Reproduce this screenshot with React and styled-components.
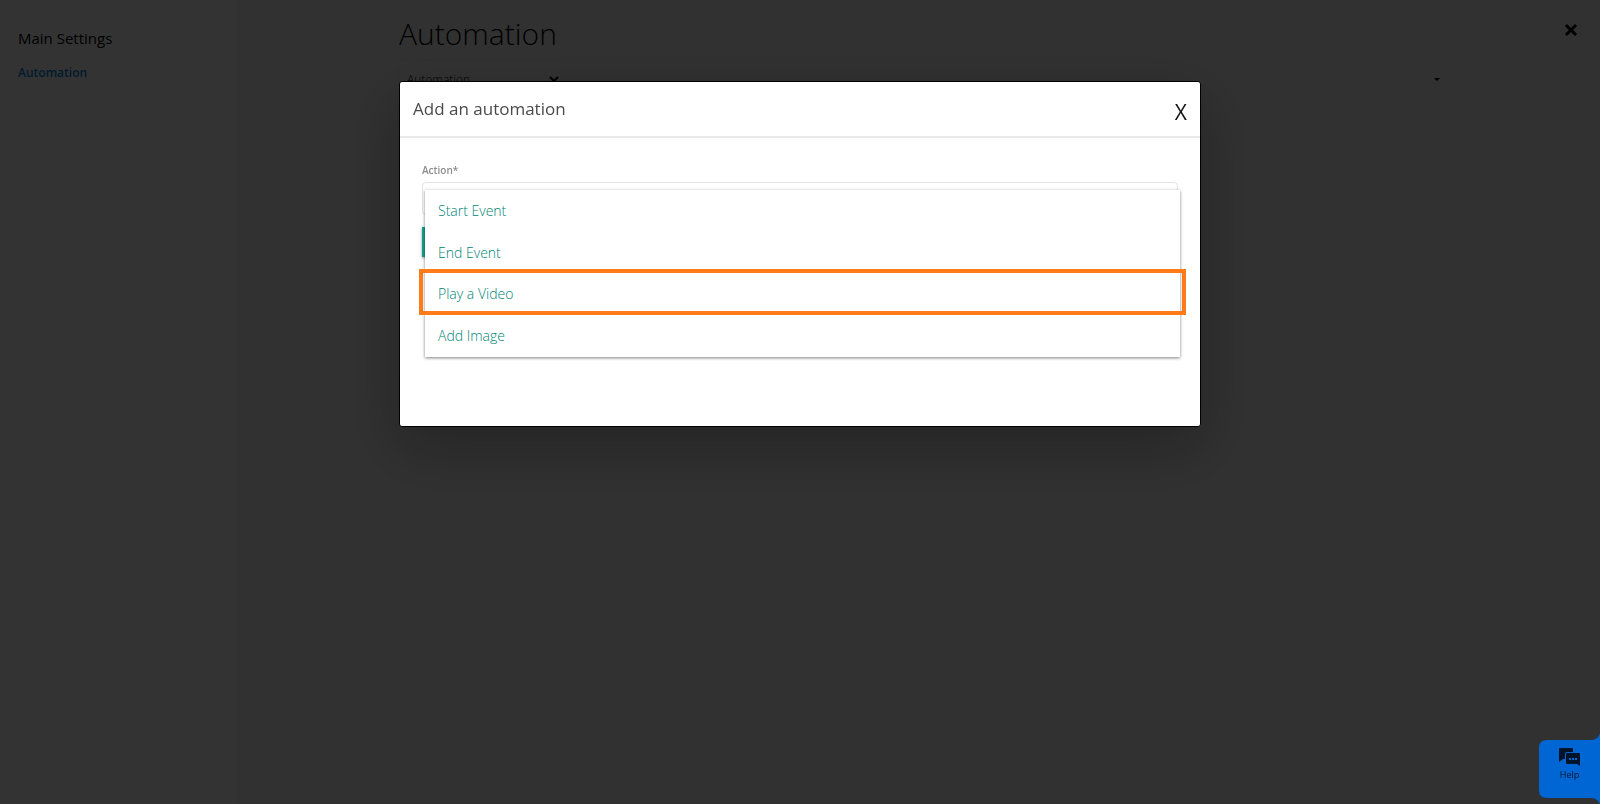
import { useState } from "react";
import styled, { createGlobalStyle } from "styled-components";

const actions = ["Start Event", "End Event", "Play a Video", "Add Image"];

function Sidebar() {
    return (
        <SidebarStyle>
            <h2>Main Settings</h2>
            <a href="#automation">Automation</a>
        </SidebarStyle>
    )
}

function Settings() {
    return (
        <SettingsStyle>
            <h1>Automation</h1>
            <Filters>
                <SelectBox>
                    <select aria-label="Category" defaultValue="Automation">
                        <option>Automation</option>
                    </select>
                    <svg width="10" height="7" viewBox="0 0 10 7">
                        <path d="M1 1l4 4 4-4" fill="none" stroke="#000" strokeWidth="2" />
                    </svg>
                </SelectBox>
                <MoreButton type="button" aria-label="More">
                    <svg width="6" height="3" viewBox="0 0 6 3">
                        <path d="M0 0h6L3 3z" />
                    </svg>
                </MoreButton>
            </Filters>
        </SettingsStyle>
    )
}

function ActionField() {
    const [action, setAction] = useState("");

    return (
        <Field>
            <label htmlFor="action">Action*</label>
            <input id="action" type="text" value={action} readOnly />
            <SaveButton type="submit" aria-label="Save" />
            <Options>
                {actions.map((name) => (
                    <Option
                        key={name}
                        type="button"
                        $marked={name === "Play a Video"}
                        onClick={() => setAction(name)}
                    >
                        {name}
                    </Option>
                ))}
            </Options>
        </Field>
    )
}

function Modal() {
    return (
        <Overlay>
            <ModalStyle role="dialog" aria-labelledby="modal-title">
                <ModalHeader>
                    <h3 id="modal-title">Add an automation</h3>
                    <button type="button">X</button>
                </ModalHeader>
                <ModalBody>
                    <ActionField />
                </ModalBody>
            </ModalStyle>
        </Overlay>
    )
}

function Help() {
    return (
        <HelpStyle>
            <HelpShape viewBox="0 0 61 72">
                <path d="M61 0C60 4 57 7 52 7H8Q0 7 0 15v42q0 8 8 8h44c5 0 8 3 9 7z" fill="#0066d3" />
            </HelpShape>
            <HelpIcon width="22" height="19" viewBox="0 0 22 19">
                <path d="M1 0h12q1 0 1 1v3H8Q6 4 6 6v5H4l-4 3V1q0-1 1-1z" fill="#001429" />
                <path d="M8 5h12q1 0 1 1v12l-3-2H8q-1 0-1-1V6q0-1 1-1z" fill="#001429" />
                <path d="M10 10h2v2h-2zM13 10h2v2h-2zM16 10h2v2h-2z" fill="#0066d3" />
            </HelpIcon>
            <span>Help</span>
        </HelpStyle>
    )
}

export default function App() {
    return (
        <>
            <GlobalStyle />
            <Page>
                <Sidebar />
                <Settings />
                <CloseButton type="button" aria-label="Close">
                    <svg width="14" height="14" viewBox="0 0 14 14">
                        <path d="M3 3l8 8M11 3l-8 8" stroke="#000" strokeWidth="3" strokeLinecap="square" />
                    </svg>
                </CloseButton>
            </Page>
            <Modal />
            <Help />
        </>
    )
}

const GlobalStyle = createGlobalStyle`
    * {
        box-sizing: border-box;
    }
    body {
        margin: 0;
        font-family: "Open Sans", sans-serif;
        background: #f5f5f5;
    }
    button, input, select {
        font-family: inherit;
    }
    h1, h2, h3 {
        margin: 0;
    }
`

const Page = styled.div`
    display: flex;
    position: relative;
    min-height: 100vh;
`

const SidebarStyle = styled.nav`
    flex: 0 0 239px;
    padding: 27px 18px;
    background: #fff;
    border-right: 1px solid #eee;

    h2 {
        font-size: 15px;
        line-height: 22px;
        font-weight: 400;
        color: #000;
    }
    a {
        display: block;
        margin-top: 14px;
        font-size: 12px;
        line-height: 20px;
        font-weight: 600;
        color: #0087dc;
        text-decoration: none;
    }
`

const SettingsStyle = styled.main`
    flex: 1;
    padding: 14px 160px;

    h1 {
        font-size: 30px;
        line-height: 40px;
        font-weight: 300;
        color: #000;
    }
`

const Filters = styled.div`
    display: flex;
    justify-content: space-between;
    align-items: center;
    margin-top: 6px;
`

const SelectBox = styled.div`
    position: relative;

    select {
        appearance: none;
        width: 163px;
        height: 38px;
        padding: 0 7px;
        border: 1px solid #eee;
        border-radius: 2px;
        background: #f8f8f8;
        font-size: 12px;
        font-weight: 300;
        color: #000;
    }
    svg {
        position: absolute;
        right: 3px;
        top: 16px;
    }
`

const MoreButton = styled.button`
    display: flex;
    padding: 0;
    border: 0;
    background: none;
`

const CloseButton = styled.button`
    position: absolute;
    top: 23px;
    right: 22px;
    display: flex;
    padding: 0;
    border: 0;
    background: none;
`

const Overlay = styled.div`
    position: fixed;
    inset: 0;
    padding-top: 81px;
    background: rgba(0, 0, 0, 0.8);
`

const ModalStyle = styled.div`
    box-sizing: content-box;
    width: 50%;
    margin: 0 auto;
    background: #fff;
    border: 1px solid #000;
    border-radius: 3px;
    box-shadow: 0 20px 60px rgba(0, 0, 0, 0.3);
`

const ModalHeader = styled.header`
    display: flex;
    justify-content: space-between;
    align-items: center;
    height: 56px;
    padding: 0 13px;
    border-bottom: 2px solid #e9e9e9;

    h3 {
        font-size: 17px;
        line-height: 24px;
        font-weight: 400;
        color: #4a4a4a;
    }
    button {
        padding: 6px 0 0;
        border: 0;
        background: none;
        font-size: 21px;
        line-height: 24px;
        color: #111;
    }
`

const ModalBody = styled.div`
    padding: 24px 22px 169px;
`

const Field = styled.form`
    position: relative;

    label {
        display: block;
        font-size: 10px;
        line-height: 16px;
        font-weight: 600;
        color: #8c8c8c;
    }
    input {
        display: block;
        width: 100%;
        height: 33px;
        margin-top: 4px;
        border: 1px solid #e4e4e4;
        border-radius: 4px;
        background: #fff;
    }
`

const SaveButton = styled.button`
    display: block;
    width: 80px;
    height: 30px;
    margin-top: 12px;
    border: 0;
    background: #12a192;
    box-shadow: 0 1px 3px rgba(0, 0, 0, 0.4);
`

const Options = styled.div`
    position: absolute;
    top: 28px;
    left: 3px;
    right: -2px;
    display: grid;
    grid-auto-rows: 1fr;
    height: 167px;
    background: #fff;
    box-shadow: 0 1px 3px rgba(0, 0, 0, 0.5);
`

const Option = styled.button`
    position: relative;
    z-index: ${(props) => (props.$marked ? 1 : 0)};
    padding: 0 13px;
    border: 0;
    background: #fff;
    font-size: 14px;
    line-height: 20px;
    font-weight: 300;
    text-align: left;
    color: #008577;

    &::after {
        content: "";
        display: ${(props) => (props.$marked ? "block" : "none")};
        position: absolute;
        inset: -5px -6px 0;
        border: 4px solid #ff7b17;
    }
`

const HelpStyle = styled.a.attrs({ href: "#help" })`
    position: fixed;
    right: 0;
    bottom: 0;
    display: flex;
    flex-direction: column;
    align-items: center;
    width: 61px;
    height: 71px;
    padding-top: 15px;
    font-size: 9px;
    line-height: 14px;
    color: #001429;
    text-decoration: none;

    span {
        z-index: 1;
        margin-top: 1px;
    }
`

const HelpShape = styled.svg`
    position: absolute;
    inset: 0;
`

const HelpIcon = styled.svg`
    z-index: 1;
`
